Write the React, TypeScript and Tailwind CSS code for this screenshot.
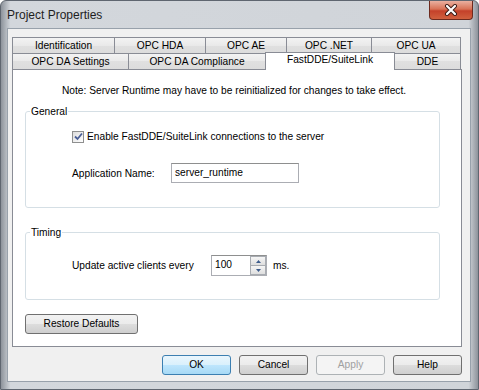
const font = "font-['Liberation_Sans',Arial,sans-serif]";

const row1 = [
  { label: "Identification", w: "w-[103px]" },
  { label: "OPC HDA", w: "w-[92px]" },
  { label: "OPC AE", w: "w-[82px]" },
  { label: "OPC .NET", w: "w-[86px]" },
  { label: "OPC UA", w: "w-[90px]" },
];

const row2 = [
  { label: "OPC DA Settings", w: "w-[117px]", active: false },
  { label: "OPC DA Compliance", w: "w-[138px]", active: false },
  { label: "FastDDE/SuiteLink", w: "w-[130px]", active: true },
  { label: "DDE", w: "w-[67px]", active: false },
];

const btnBase = "flex items-center justify-center rounded-[3px] border text-[10.2px] leading-none";
const btnGrey =
  "border-[#707070] bg-[linear-gradient(#f2f2f2,#ebebeb_50%,#dddddd_50%,#cfcfcf)] text-black";

function Tab({ label, w, first }: { label: string; w: string; first: boolean }) {
  return (
    <div
      className={`${w} ${first ? "" : "-ml-px"} flex h-[16px] items-center justify-center border border-b-0 border-[#898c95] bg-[linear-gradient(#f3f3f3,#e9e9e9_50%,#e0e0e0_50%,#dcdcdc)] pt-px text-[10.2px] leading-none`}
    >
      {label}
    </div>
  );
}

function CheckBox() {
  return (
    <div className="flex h-[12px] w-[12px] items-center justify-center border border-[#8e8f8f] bg-[linear-gradient(135deg,#dcdcdc,#ffffff)]">
      <svg width="9" height="9" viewBox="0 0 9 9">
        <path d="M1 4.5 L3.5 7 L8 1.5" fill="none" stroke="#4a5f97" strokeWidth="1.8" />
      </svg>
    </div>
  );
}

export default function App() {
  return (
    <div
      className={`${font} relative flex h-[390px] w-[479px] flex-col overflow-hidden rounded-t-[6px] border border-[#5f6670] bg-[linear-gradient(90deg,#8d939b,#d3d7dc_2%,#d0d4d9_98%,#8d939b)] text-black`}
    >
      {/* title bar */}
      <div className="flex h-[27px] shrink-0 items-start justify-between">
        <div className="pl-[6px] pt-[7px] text-[12px] leading-[14px] text-[#1e1e1e]">Project Properties</div>
        <div className="mr-[5px] flex h-[19px] w-[44px] items-center justify-center rounded-b-[4px] border border-t-0 border-[#6d2a1e] bg-[linear-gradient(#eab0a0,#d87256_45%,#c4412a_55%,#d0603e)]">
          <svg width="14" height="12" viewBox="0 0 14 12">
            <path d="M3 2 L11 10 M11 2 L3 10" stroke="#3a1a14" strokeWidth="4" strokeLinecap="round" />
            <path d="M3 2 L11 10 M11 2 L3 10" stroke="#ffffff" strokeWidth="2.2" strokeLinecap="round" />
          </svg>
        </div>
      </div>

      {/* client area */}
      <div className="mx-[6px] flex h-[354px] w-[464px] shrink-0 flex-col border border-[#98a1ab] bg-[#f0f0f0] pl-[4px] pr-[8px] pt-[8px]">
        {/* tabs */}
        <div className="flex">
          {row1.map((t, i) => (
            <Tab key={t.label} label={t.label} w={t.w} first={i === 0} />
          ))}
        </div>
        <div className="flex h-[16px] items-start">
          {row2.map((t, i) =>
            t.active ? (
              <div
                key={t.label}
                className={`${t.w} relative z-10 -ml-px -mt-px flex h-[18px] items-start justify-center border border-b-0 border-[#898c95] bg-white pt-[2px] text-[10.2px] leading-none`}
              >
                {t.label}
              </div>
            ) : (
              <Tab key={t.label} label={t.label} w={t.w} first={i === 0} />
            )
          )}
        </div>

        {/* panel */}
        <div className="flex h-[278px] w-[450px] flex-col border border-[#898c95] bg-white">
          <div className="pl-[49px] pt-[14px] text-[10.2px] leading-[13px]">
            Note: Server Runtime may have to be reinitialized for changes to take effect.
          </div>

          <fieldset className="ml-[12px] mt-[8px] h-[103px] w-[415px] rounded-[3px] border border-[#d5dfe5]">
            <legend className="ml-[4px] px-px text-[10.2px] leading-[13px]">General</legend>
            <div className="flex flex-col pl-[46px]">
              <div className="mt-[12px] flex h-[13px] items-center gap-[3px]">
                <CheckBox />
                <span className="text-[10.2px] leading-[13px]">Enable FastDDE/SuiteLink connections to the server</span>
              </div>
              <div className="mt-[20px] flex h-[20px] items-center">
                <span className="w-[99px] text-[10.2px] leading-[13px]">Application Name:</span>
                <div className="flex h-[20px] w-[128px] items-center border border-[#abadb3] border-t-[#8e8f8f] pl-[3px] text-[10.2px] leading-none">
                  server_runtime
                </div>
              </div>
            </div>
          </fieldset>

          <fieldset className="ml-[12px] mt-[18px] h-[74px] w-[415px] rounded-[3px] border border-[#d5dfe5]">
            <legend className="ml-[4px] px-px text-[10.2px] leading-[13px]">Timing</legend>
            <div className="mt-[16px] flex h-[21px] items-center pl-[46px]">
              <span className="w-[139px] text-[10.2px] leading-[13px]">Update active clients every</span>
              <div className="flex h-[21px] w-[56px] items-stretch border border-[#abadb3] border-t-[#8e8f8f]">
                <div className="flex flex-1 items-center pl-[3px] text-[10.2px] leading-none">100</div>
                <div className="flex w-[16px] flex-col">
                  <div className="flex flex-1 items-center justify-center border border-[#a8acb2] bg-[linear-gradient(#f6f6f6,#dedede)]">
                    <svg width="5" height="3" viewBox="0 0 5 3">
                      <path d="M0 3 L2.5 0 L5 3 Z" fill="#3d5c8c" />
                    </svg>
                  </div>
                  <div className="flex flex-1 items-center justify-center border border-t-0 border-[#a8acb2] bg-[linear-gradient(#f6f6f6,#dedede)]">
                    <svg width="5" height="3" viewBox="0 0 5 3">
                      <path d="M0 0 L2.5 3 L5 0 Z" fill="#3d5c8c" />
                    </svg>
                  </div>
                </div>
              </div>
              <span className="ml-[6px] text-[10.2px] leading-[13px]">ms.</span>
            </div>
          </fieldset>

          <button className={`${btnBase} ${btnGrey} ml-[12px] mt-[14px] h-[20px] w-[113px]`}>Restore Defaults</button>
        </div>

        {/* dialog buttons */}
        <div className="mt-[8px] flex justify-end gap-[8px]">
          <button className={`${btnBase} h-[20px] w-[69px] border-[#3c7fb1] bg-[linear-gradient(#eaf6fd,#d9f0fc_50%,#bee6fd_50%,#a7d9f5)] text-black`}>
            OK
          </button>
          <button className={`${btnBase} ${btnGrey} h-[20px] w-[69px]`}>Cancel</button>
          <button className={`${btnBase} h-[20px] w-[69px] border-[#adb2b5] bg-[#f4f4f4] text-[#a0a0a0]`}>Apply</button>
          <button className={`${btnBase} ${btnGrey} h-[20px] w-[69px]`}>Help</button>
        </div>
      </div>
    </div>
  );
}
